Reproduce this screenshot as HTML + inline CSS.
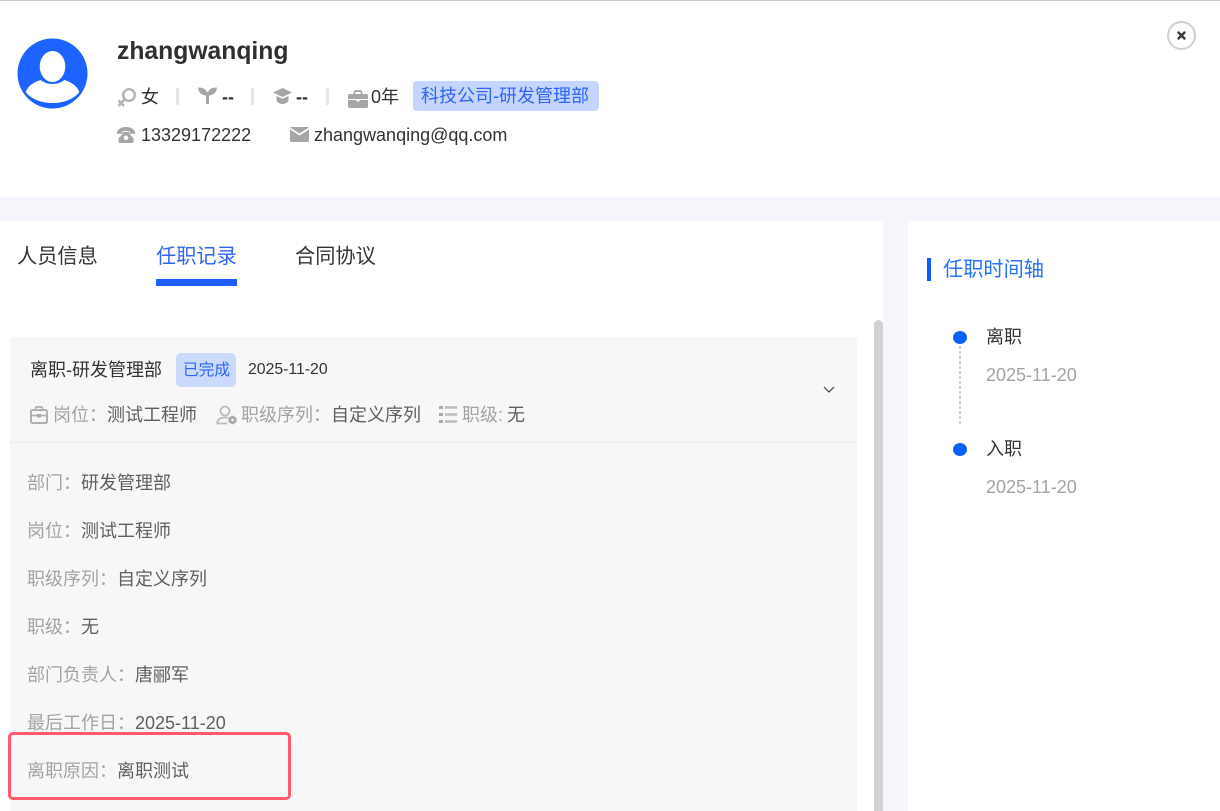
<!DOCTYPE html>
<html lang="zh">
<head>
<meta charset="utf-8">
<title>任职记录</title>
<style>
html,body{margin:0;padding:0;width:1220px;height:811px;overflow:hidden;background:#f4f6fb;}
body{position:relative;font-family:"Liberation Sans","Noto Sans CJK SC",sans-serif;color:#333;}
.b{position:absolute;}
.t{position:absolute;white-space:nowrap;line-height:24px;height:24px;}
.g{color:#a3a3a3;}
.d{color:#5f5f5f;}
svg{position:absolute;display:block;}
.sep{position:absolute;width:3px;height:17px;top:88px;background:#e6e6e6;}
</style>
</head>
<body>
<div class="b" style="left:0;top:0;width:1220px;height:197px;background:#fff;"></div>
<div class="b" style="left:0;top:0;width:1220px;height:1px;background:#ccc;"></div>

<!-- avatar -->
<svg style="left:17px;top:38px" width="71" height="71" viewBox="0 0 71 71">
  <ellipse cx="35.500" cy="35.500" rx="35" ry="35" fill="#1e62ff"/>
  <ellipse cx="35.500" cy="28.500" rx="12.800" ry="15.500" fill="#fff"/>
  <path d="M8.700 54c2-6 8-10 15-12 3 2.500 7 4 11.800 4s8.800-1.500 11.800-4c7 2 13 6 15 12-5 7-15.500 11-26.800 11S13.700 61 8.700 54z" fill="#fff"/>
</svg>

<div class="t" style="left:117px;top:38px;font-size:24.700px;line-height:28px;height:28px;font-weight:700;color:#2f2f2f">zhangwanqing</div>

<!-- gender icon -->
<svg style="left:117px;top:87px" width="20" height="20" viewBox="0 0 20 20">
  <circle cx="12" cy="8" r="5.800" fill="none" stroke="#b4b4b4" stroke-width="2.400"/>
  <path d="M7.500 12.500 1.500 19M1.500 13.500l5.500 5.500" fill="none" stroke="#b4b4b4" stroke-width="2.400"/>
</svg>
<div class="t" style="left:141px;top:85px;font-size:18px">女</div>
<div class="sep" style="left:176px"></div>

<!-- sprout -->
<svg style="left:198px;top:87px" width="19" height="17" viewBox="0 0 19 17">
  <path d="M9 8.500C3.500 8.500.5 5.500 0 .5 5 .5 8.500 2 9 6zM10 8.500c5.500 0 8.500-3 9-8-5 0-8.500 1.500-9 5.500z" fill="#a6a6a6"/>
  <rect x="8" y="5" width="3" height="12" fill="#a6a6a6"/>
</svg>
<div class="t" style="left:222px;top:85px;font-size:18px;font-weight:700">--</div>
<div class="sep" style="left:251px"></div>

<!-- cap -->
<svg style="left:273px;top:88px" width="19" height="16" viewBox="0 0 19 16">
  <path d="M9.500 0 19 4.500 9.500 9 0 4.500z" fill="#a6a6a6"/>
  <path d="M3.500 8l6 2.800 6-2.800v4.500C14 15 12 16 9.500 16S5 15 3.500 12.500z" fill="#a6a6a6"/>
</svg>
<div class="t" style="left:296px;top:85px;font-size:18px;font-weight:700">--</div>
<div class="sep" style="left:326px"></div>

<!-- case -->
<svg style="left:348px;top:90px" width="20" height="18" viewBox="0 0 20 18">
  <path d="M6.500 4.500V2.500C6.500 1.500 7 1 8 1h4c1 0 1.500.5 1.500 1.500v2" fill="none" stroke="#a6a6a6" stroke-width="1.800"/>
  <path d="M1.500 4h17c.8 0 1.500.7 1.500 1.500V9H0V5.500C0 4.700.7 4 1.500 4zM0 10h8.500v1.500h3V10H20v6.500c0 .8-.7 1.500-1.500 1.500h-17C.7 18 0 17.300 0 16.500z" fill="#a6a6a6"/>
</svg>
<div class="t" style="left:371px;top:85px;font-size:18px">0年</div>

<div class="b" style="left:413px;top:81px;width:186px;height:30px;background:#c5d5ff;border-radius:4px"></div>
<div class="t" style="left:421px;top:84px;font-size:18px;color:#2f66f6">科技公司-研发管理部</div>

<!-- phone -->
<svg style="left:117px;top:127px" width="18" height="16" viewBox="0 0 18 16">
  <path d="M0 5C1.500 1.500 5 0 9 0s7.500 1.500 9 5v1.800h-5V4.500c-2.700-.7-5.300-.7-8 0v2.300H0z" fill="#a6a6a6"/>
  <path d="M5.500 5h7v2l4 4.500V14.500c0 .8-.7 1.500-1.500 1.500H3c-.8 0-1.500-.7-1.500-1.500V11.500l4-4.500z" fill="#a6a6a6"/>
  <circle cx="9" cy="10.800" r="2.300" fill="#fff"/>
</svg>
<div class="t" style="left:141px;top:123px;font-size:18px">13329172222</div>

<!-- mail -->
<svg style="left:290px;top:127px" width="19" height="15" viewBox="0 0 19 15">
  <path d="M1.500 0h16c.5 0 1 .2 1.200.6L9.500 6.500.3.600C.5.200 1 0 1.500 0z" fill="#a6a6a6"/>
  <path d="M0 2.500 9.500 8.500 19 2.500v11c0 .8-.7 1.500-1.500 1.500h-16C.7 15 0 14.300 0 13.500z" fill="#a6a6a6"/>
</svg>
<div class="t" style="left:314px;top:123px;font-size:18px">zhangwanqing@qq.com</div>

<!-- close -->
<svg style="left:1167px;top:21px" width="29" height="29" viewBox="0 0 29 29">
  <circle cx="14.500" cy="14.500" r="13.500" fill="#fff" stroke="#d0d0d0" stroke-width="2"/>
  <path d="M11.500 11.500l6 6M17.500 11.500l-6 6" stroke="#3a3a3a" stroke-width="2.400" stroke-linecap="round"/>
</svg>

<!-- left panel -->
<div class="b" style="left:0;top:221px;width:883px;height:590px;background:#fff"></div>
<div class="t" style="left:17px;top:245px;font-size:20.200px;color:#333">人员信息</div>
<div class="t" style="left:156px;top:245px;font-size:20.200px;color:#2f66f6">任职记录</div>
<div class="t" style="left:295px;top:245px;font-size:20.200px;color:#333">合同协议</div>
<div class="b" style="left:156px;top:279px;width:81px;height:7px;background:#1e5eff"></div>

<!-- scrollbar -->
<div class="b" style="left:874px;top:320px;width:9px;height:491px;background:#d0d1d3;border-radius:5px 5px 0 0"></div>

<!-- card -->
<div class="b" style="left:10px;top:337px;width:847px;height:474px;background:#f7f7f7"></div>
<div class="b" style="left:10px;top:442px;width:847px;height:1px;background:#ebebeb"></div>

<div class="t" style="left:30px;top:358px;font-size:18px;color:#333">离职-研发管理部</div>
<div class="b" style="left:176px;top:353px;width:60px;height:34px;background:#cbd9fb;border-radius:5px"></div>
<div class="t" style="left:183px;top:359px;font-size:15.700px;color:#2f66f6">已完成</div>
<div class="t" style="left:248px;top:358px;font-size:15.800px;color:#333">2025-11-20</div>

<svg style="left:822px;top:384px" width="14" height="10" viewBox="0 0 14 10">
  <path d="M2 3 7 8 12 3" fill="none" stroke="#444" stroke-width="1.200"/>
</svg>

<svg style="left:30px;top:406px" width="18" height="18" viewBox="0 0 18 18">
  <path d="M5.500 4V2.500c0-1 .5-1.500 1.500-1.500h4c1 0 1.500.5 1.500 1.500V4" fill="none" stroke="#b0b0b0" stroke-width="1.700"/>
  <rect x="1" y="4" width="16" height="13" rx="1.500" fill="none" stroke="#b0b0b0" stroke-width="2"/>
  <path d="M1 9.500h16" stroke="#b0b0b0" stroke-width="1.700"/>
  <rect x="7" y="8" width="4" height="3.500" fill="#a8a8a8"/>
</svg>
<div class="t g" style="left:53px;top:403px;font-size:18px">岗位：</div>
<div class="t d" style="left:107px;top:403px;font-size:18px">测试工程师</div>

<svg style="left:216px;top:405px" width="21" height="20" viewBox="0 0 21 20">
  <circle cx="9" cy="6" r="4.500" fill="none" stroke="#bcbcbc" stroke-width="1.800"/>
  <path d="M1 18.500c.5-4 3.500-6 8-6 1 0 2 .1 3 .4" fill="none" stroke="#bcbcbc" stroke-width="1.800"/>
  <path d="M1 18.500h10" stroke="#bcbcbc" stroke-width="1.800"/>
  <path d="M16.500 10.500l4 2.200v4.600l-4 2.200-4-2.200v-4.600z" fill="#a8a8a8"/>
  <circle cx="16.500" cy="15" r="1.300" fill="#f7f7f7"/>
</svg>
<div class="t g" style="left:241px;top:403px;font-size:18px">职级序列：</div>
<div class="t d" style="left:331px;top:403px;font-size:18px">自定义序列</div>

<svg style="left:439px;top:405px" width="18" height="19" viewBox="0 0 18 19">
  <path d="M6 2.500h12M6 9.500h12M6 16.500h12" stroke="#bcbcbc" stroke-width="2.400"/>
  <path d="M0 1h4v3H0zM0 8h4v3H0zM0 15h4v3H0z" fill="#a8a8a8"/>
</svg>
<div class="t g" style="left:462px;top:403px;font-size:18px">职级:</div>
<div class="t d" style="left:507px;top:403px;font-size:18px">无</div>

<div class="t g" style="left:27px;top:471px;font-size:18px">部门：</div>
<div class="t d" style="left:81px;top:471px;font-size:18px">研发管理部</div>
<div class="t g" style="left:27px;top:519px;font-size:18px">岗位：</div>
<div class="t d" style="left:81px;top:519px;font-size:18px">测试工程师</div>
<div class="t g" style="left:27px;top:567px;font-size:18px">职级序列：</div>
<div class="t d" style="left:117px;top:567px;font-size:18px">自定义序列</div>
<div class="t g" style="left:27px;top:615px;font-size:18px">职级：</div>
<div class="t d" style="left:81px;top:615px;font-size:18px">无</div>
<div class="t g" style="left:27px;top:663px;font-size:18px">部门负责人：</div>
<div class="t d" style="left:135px;top:663px;font-size:18px">唐郦军</div>
<div class="t g" style="left:27px;top:711px;font-size:18px">最后工作日：</div>
<div class="t d" style="left:135px;top:711px;font-size:18px">2025-11-20</div>
<div class="t g" style="left:27px;top:759px;font-size:18px">离职原因：</div>
<div class="t d" style="left:117px;top:759px;font-size:18px">离职测试</div>

<!-- red highlight -->
<div class="b" style="left:8px;top:732px;width:277px;height:62px;border:3px solid #ff5a6e;border-radius:5px;box-sizing:content-box"></div>

<!-- right panel -->
<div class="b" style="left:908px;top:221px;width:312px;height:590px;background:#fff"></div>
<div class="b" style="left:927px;top:258px;width:4px;height:23px;background:#0b5fff"></div>
<div class="t" style="left:943px;top:258px;font-size:20.200px;color:#2374f7">任职时间轴</div>

<div class="b" style="left:953px;top:331px;width:14px;height:13px;border-radius:50%;background:#0b5fff"></div>
<div class="b" style="left:959px;top:346px;width:2px;height:79px;background:repeating-linear-gradient(to bottom,#d0d0d0 0,#d0d0d0 3px,transparent 3px,transparent 5px)"></div>
<div class="b" style="left:953px;top:443px;width:14px;height:13px;border-radius:50%;background:#0b5fff"></div>

<div class="t" style="left:986px;top:325px;font-size:18px;color:#333">离职</div>
<div class="t g" style="left:986px;top:363px;font-size:18px">2025-11-20</div>
<div class="t" style="left:986px;top:437px;font-size:18px;color:#333">入职</div>
<div class="t g" style="left:986px;top:475px;font-size:18px">2025-11-20</div>
</body>
</html>
